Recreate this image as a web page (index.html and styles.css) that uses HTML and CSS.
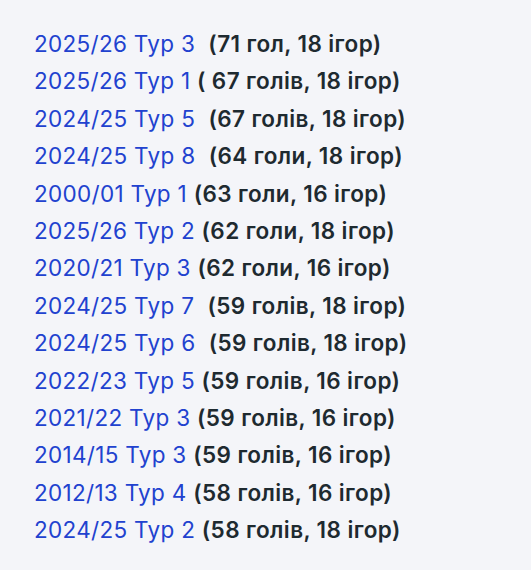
FILE: index.html
```html
<!DOCTYPE html>
<html lang="uk">
<head>
<meta charset="utf-8">
<link rel="stylesheet" href="styles.css">
</head>
<body>
<ul class="list">
<li><a class="lnk" href="#">2025/26 Тур 3</a>  <b class="info">(71 гол, 18 ігор)</b></li>
<li><a class="lnk" href="#">2025/26 Тур 1</a> <b class="info">( 67 голів, 18 ігор)</b></li>
<li><a class="lnk" href="#">2024/25 Тур 5</a>  <b class="info">(67 голів, 18 ігор)</b></li>
<li><a class="lnk" href="#">2024/25 Тур 8</a>  <b class="info">(64 голи, 18 ігор)</b></li>
<li><a class="lnk" href="#">2000/01 Тур 1</a> <b class="info">(63 голи, 16 ігор)</b></li>
<li><a class="lnk" href="#">2025/26 Тур 2</a> <b class="info">(62 голи, 18 ігор)</b></li>
<li><a class="lnk" href="#">2020/21 Тур 3</a> <b class="info">(62 голи, 16 ігор)</b></li>
<li><a class="lnk" href="#">2024/25 Тур 7</a>  <b class="info">(59 голів, 18 ігор)</b></li>
<li><a class="lnk" href="#">2024/25 Тур 6</a>  <b class="info">(59 голів, 18 ігор)</b></li>
<li><a class="lnk" href="#">2022/23 Тур 5</a> <b class="info">(59 голів, 16 ігор)</b></li>
<li><a class="lnk" href="#">2021/22 Тур 3</a> <b class="info">(59 голів, 16 ігор)</b></li>
<li><a class="lnk" href="#">2014/15 Тур 3</a> <b class="info">(59 голів, 16 ігор)</b></li>
<li><a class="lnk" href="#">2012/13 Тур 4</a> <b class="info">(58 голів, 16 ігор)</b></li>
<li><a class="lnk" href="#">2024/25 Тур 2</a> <b class="info">(58 голів, 18 ігор)</b></li>
</ul>
</body>
</html>
```
FILE: styles.css
```css
html, body {
  margin: 0;
  padding: 0;
  background: #f4f5f9;
}
body {
  font-family: Inter, "Noto Sans", sans-serif;
  font-size: 22.5px;
  letter-spacing: 0.3px;
  color: #1e2a30;
}
.list {
  list-style: none;
  margin: 0;
  padding: 25px 0 0 34px;
}
.list li {
  line-height: 37.4px;
  white-space: pre;
}
.lnk {
  color: #2142cf;
  text-decoration: none;
}
.info {
  font-weight: 600;
  letter-spacing: 0.4px;
}
```
